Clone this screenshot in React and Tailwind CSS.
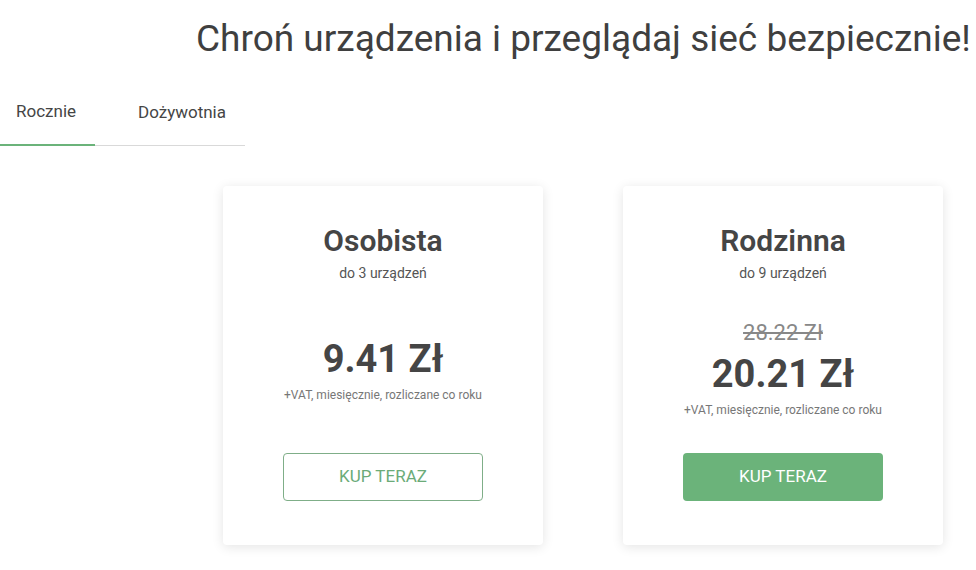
export default function App() {
  const font = { fontFamily: 'Roboto, "Noto Sans", sans-serif' }
  return (
    <div className="min-h-[570px] w-[976px] overflow-hidden bg-white text-[#454545]" style={font}>
      <h1 className="whitespace-nowrap pl-[196px] pt-[17px] text-[37px] leading-[44px] font-normal text-[#3f3f3f]">
        Chroń urządzenia i przeglądaj sieć bezpiecznie!
      </h1>

      <div className="mt-[17px] flex w-[245px] border-b border-[#d9d9d9]">
        <button className="-mb-px w-[95px] border-b-2 border-[#6bb37a] pb-[21px] pl-[16px] pt-[21px] text-left text-[17px] leading-[24px] text-[#454545]">
          Rocznie
        </button>
        <button className="pl-[43px] pb-[21px] pt-[21px] text-[17px] leading-[24px] text-[#454545]">
          Dożywotnia
        </button>
      </div>

      <div className="mt-[40px] flex gap-[80px] pl-[223px]">
        <PlanCard
          name="Osobista"
          devices="do 3 urządzeń"
          price="9.41 Zł"
        />
        <PlanCard
          name="Rodzinna"
          devices="do 9 urządzeń"
          oldPrice="28.22 Zł"
          price="20.21 Zł"
          primary
        />
      </div>
    </div>
  )
}

function PlanCard({ name, devices, oldPrice, price, primary = false }) {
  return (
    <div className="flex h-[359px] w-[320px] flex-col items-center rounded-[4px] bg-white pt-[38px] shadow-[0_2px_12px_rgba(0,0,0,0.11)]">
      <h2 className="text-[30px] leading-[34px] font-semibold text-[#454545]">{name}</h2>
      <p className="mt-[6px] text-[14px] leading-[18px] text-[#555]">{devices}</p>

      <div className="flex h-[165px] flex-col items-center justify-center pt-[9px]">
        {oldPrice && (
          <span className="text-[22px] leading-[24px] text-[#888] line-through">{oldPrice}</span>
        )}
        <span className={`${oldPrice ? 'mt-[6px]' : ''} text-[38px] leading-[46px] font-bold text-[#454545]`}>{price}</span>
        <span className="mt-[6px] text-[12px] leading-[15px] text-[#777]">
          +VAT, miesięcznie, rozliczane co roku
        </span>
      </div>

      <button
        className={`mt-[6px] h-[48px] w-[200px] rounded-[4px] text-[17px] ${primary ? 'bg-[#6bb37a] text-white' : 'border border-[#7fae88] text-[#6bab78]'}`}
      >
        KUP TERAZ
      </button>
    </div>
  )
}
